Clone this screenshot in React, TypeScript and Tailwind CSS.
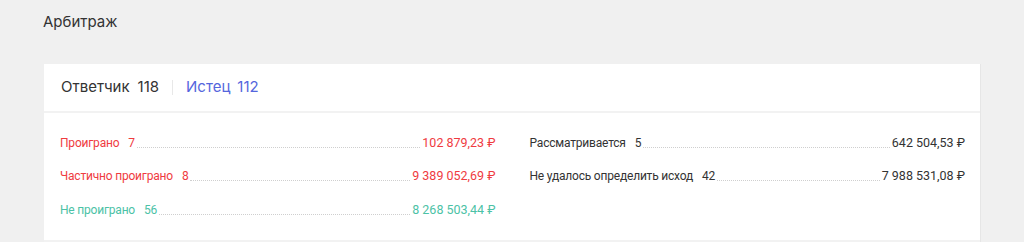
const lost = [
  { label: "Проиграно", count: 7, sum: "102 879,23 ₽", color: "text-[#ef3b3f]" },
  { label: "Частично проиграно", count: 8, sum: "9 389 052,69 ₽", color: "text-[#ef3b3f]" },
  { label: "Не проиграно", count: 56, sum: "8 268 503,44 ₽", color: "text-[#4cc2a6]" },
];

const other = [
  { label: "Рассматривается", count: 5, sum: "642 504,53 ₽", color: "text-[#333333]" },
  { label: "Не удалось определить исход", count: 42, sum: "7 988 531,08 ₽", color: "text-[#333333]" },
];

type Row = { label: string; count: number; sum: string; color: string };

function StatRow({ row }: { row: Row }) {
  return (
    <div className={`flex items-end h-[33.5px] pb-[9px] text-[12px] tracking-[-0.2px] leading-[16px] ${row.color}`}>
      <span className="whitespace-nowrap">{row.label}</span>
      <span className="ml-[9px] whitespace-nowrap">{row.count}</span>
      <span className="flex-1 mx-[2px] mb-[3px] border-b border-dotted border-[#cfcfcf]" />
      <span className="whitespace-nowrap text-[12.5px] tracking-normal">{row.sum}</span>
    </div>
  );
}

export default function App() {
  return (
    <div className="min-h-[242px] bg-[#f0f0f0] font-['Roboto',sans-serif] text-[#333333]">
      <div className="pl-[43px] pt-[13px] h-[64px] font-['Inter',sans-serif]">
        <h1 className="text-[15px] leading-[18px] font-normal">Арбитраж</h1>
      </div>
      <div className="ml-[44px] w-[937px] bg-white border-r border-[#e6e6e6]">
        <div className="h-[49px] flex items-center pl-[17px] text-[15px] font-['Inter',sans-serif] border-b-2 border-[#f2f2f2]">
          <span className="text-[#333333]">Ответчик</span>
          <span className="ml-[8px] text-[#333333]">118</span>
          <span className="mx-[13px] h-[15px] w-px bg-[#e8e8e8]" />
          <span className="text-[#5566dd]">Истец</span>
          <span className="ml-[7px] text-[#5566dd]">112</span>
        </div>
        <div className="grid grid-cols-2 gap-x-[34px] pl-[16px] pr-[15px] pt-[13px] pb-[13px] border-b-2 border-[#f2f2f2]">
          <div>
            {lost.map((r) => (
              <StatRow key={r.label} row={r} />
            ))}
          </div>
          <div>
            {other.map((r) => (
              <StatRow key={r.label} row={r} />
            ))}
          </div>
        </div>
      </div>
    </div>
  );
}
